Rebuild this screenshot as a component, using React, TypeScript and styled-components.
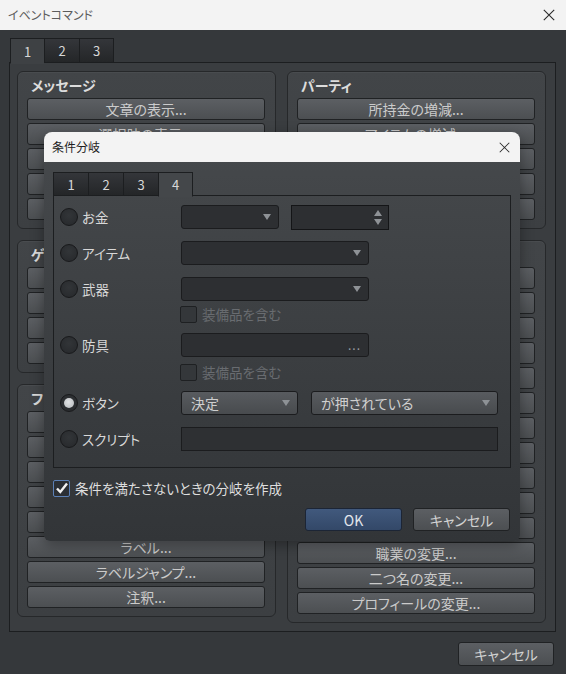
import React from "react";
import styled, { createGlobalStyle, css } from "styled-components";

const GlobalStyle = createGlobalStyle`
  html, body { margin: 0; padding: 0; background: #35383b; }
  body {
    font-family: "Noto Sans CJK JP", "Noto Sans", "Liberation Sans", sans-serif;
    font-feature-settings: "palt";
  }
  * { box-sizing: border-box; }
`;

const Window = styled.div`
  position: relative;
  width: 566px;
  height: 674px;
  display: flex;
  flex-direction: column;
  background: #35383b;
  overflow: hidden;
`;

const TitleBar = styled.div<{ $h: number; $padR: number }>`
  flex: none;
  height: ${(p) => p.$h}px;
  background: #f3f3f3;
  display: flex;
  align-items: center;
  justify-content: space-between;
  padding: 0 ${(p) => p.$padR}px 0 8px;
`;

const TitleText = styled.span<{ $color: string }>`
  font-size: 12px;
  color: ${(p) => p.$color};
  line-height: 1;
`;

const CloseBtn = styled.span`
  display: flex;
  align-items: center;
  justify-content: center;
`;

const Body = styled.div`
  flex: 1;
  display: flex;
  flex-direction: column;
  padding: 8px 10px 0 9px;
`;

const TabStrip = styled.div<{ $indent: number }>`
  display: flex;
  padding-left: ${(p) => p.$indent}px;
  position: relative;
  z-index: 1;
`;

const Tab = styled.div<{ $active?: boolean; $w: number; $h: number; $activeBg: string }>`
  width: ${(p) => p.$w}px;
  height: ${(p) => p.$h}px;
  border: 1px solid #1c1e20;
  border-right: none;
  &:last-child { border-right: 1px solid #1c1e20; }
  display: flex;
  align-items: center;
  justify-content: center;
  font-size: 13px;
  color: #d8d8d8;
  background: linear-gradient(#34363a, #242628);
  ${(p) =>
    p.$active &&
    css`
      background: ${p.$activeBg};
      border-bottom-color: transparent;
      height: ${p.$h + 1}px;
      margin-bottom: -1px;
      & + div { border-left: 1px solid #1c1e20; }
    `}
`;

const TabPanel = styled.div`
  height: 570px;
  margin-top: -1px;
  border: 1px solid #1c1e20;
  background: #3a3d40;
  display: grid;
  grid-template-columns: 259px 259px;
  column-gap: 11px;
  align-items: start;
  padding: 8px 9px 0 7px;
`;

const Column = styled.div`
  display: flex;
  flex-direction: column;
  gap: 11px;
`;

const Group = styled.div`
  border: 1px solid #26282a;
  border-radius: 6px;
  background: linear-gradient(#424548, #3c3f42);
  padding: 0 10px 8px 9px;
  box-shadow: inset 0 1px 0 rgba(255, 255, 255, 0.04);
`;

const GroupTitle = styled.div`
  height: 26px;
  line-height: 26px;
  padding-left: 4px;
  font-size: 14px;
  font-weight: 700;
  color: #dcdcdc;
  white-space: nowrap;
  overflow: hidden;
`;

const ButtonList = styled.div`
  display: flex;
  flex-direction: column;
  gap: 3px;
`;

const CmdButton = styled.div`
  height: 22px;
  border: 1px solid #202224;
  border-radius: 3px;
  background: linear-gradient(#5c5f63, #4c4f52);
  color: #cbcbcb;
  font-size: 14px;
  line-height: 20px;
  text-align: center;
  white-space: nowrap;
  overflow: hidden;
`;

const Footer = styled.div`
  display: flex;
  justify-content: flex-end;
  padding: 10px 2px 0 0;
`;

const PushButton = styled.div<{ $primary?: boolean; $w: number; $h: number }>`
  width: ${(p) => p.$w}px;
  height: ${(p) => p.$h}px;
  border: 1px solid ${(p) => (p.$primary ? "#1c2535" : "#202224")};
  border-radius: 3px;
  background: ${(p) =>
    p.$primary ? "linear-gradient(#41597d, #334868)" : "linear-gradient(#5c5f63, #4c4f52)"};
  color: ${(p) => (p.$primary ? "#e2e6ec" : "#d2d2d2")};
  font-size: 14px;
  display: flex;
  align-items: center;
  justify-content: center;
`;

/* ---------- dialog ---------- */

const Dialog = styled.div`
  position: absolute;
  left: 44px;
  top: 132px;
  width: 476px;
  height: 409px;
  border-radius: 8px 8px 6px 6px;
  overflow: hidden;
  display: flex;
  flex-direction: column;
  background: linear-gradient(#46494c, #323538);
  box-shadow: 0 4px 14px rgba(0, 0, 0, 0.35);
`;

const DialogContent = styled.div`
  display: flex;
  flex-direction: column;
  padding: 10px 9px 0 9px;
`;

const DTabPanel = styled.div`
  height: 273px;
  margin-top: -1px;
  border: 1px solid #1c1e20;
  padding: 9px 0 0 6px;
  display: flex;
  flex-direction: column;
`;

const Row = styled.div<{ $gap: number; $h?: number }>`
  display: flex;
  align-items: center;
  height: ${(p) => p.$h ?? 24}px;
  margin-top: ${(p) => p.$gap}px;
`;

const LabelCell = styled.div<{ $w: number }>`
  width: ${(p) => p.$w}px;
  flex: none;
  display: flex;
  align-items: center;
  gap: 4px;
`;

const Radio = styled.span<{ $checked?: boolean }>`
  width: 18px;
  height: 18px;
  border-radius: 50%;
  border: 1px solid #18191b;
  background: radial-gradient(circle at 50% 40%, #323538, #26282b);
  display: flex;
  align-items: center;
  justify-content: center;
  &::after {
    content: "";
    display: ${(p) => (p.$checked ? "block" : "none")};
    width: 10px;
    height: 10px;
    border-radius: 50%;
    background: radial-gradient(circle at 45% 40%, #e0e2e4, #b4b7ba);
  }
`;

const RadioLabel = styled.span`
  font-size: 13.5px;
  color: #d8d8d8;
  white-space: nowrap;
`;

const Select = styled.div<{ $w: number; $filled?: boolean; $offset?: number }>`
  width: ${(p) => p.$w}px;
  height: 24px;
  margin-left: ${(p) => p.$offset ?? 0}px;
  border: 1px solid #1b1c1e;
  border-radius: 3px;
  background: ${(p) => (p.$filled ? "linear-gradient(#585b5f, #484b4e)" : "#2d2f32")};
  display: flex;
  align-items: center;
  justify-content: space-between;
  padding: 0 7px 0 9px;
  font-size: 14px;
  color: #cfcfcf;
  white-space: nowrap;
`;

const Arrow = styled.span<{ $up?: boolean }>`
  width: 0;
  height: 0;
  border-left: 4px solid transparent;
  border-right: 4px solid transparent;
  ${(p) =>
    p.$up
      ? css`border-bottom: 6px solid #8e9296;`
      : css`border-top: 6px solid #8e9296;`}
`;

const SpinBox = styled.div`
  width: 98px;
  height: 25px;
  margin-left: 12px;
  border: 1px solid #141517;
  background: #2d2f32;
  display: flex;
  justify-content: flex-end;
  align-items: center;
  padding-right: 6px;
`;

const SpinArrows = styled.div`
  display: flex;
  flex-direction: column;
  gap: 3px;
`;

const Ellipsis = styled.span`
  font-size: 12px;
  letter-spacing: 1px;
  color: #9a9ea2;
  line-height: 1;
`;

const TextField = styled.div<{ $w: number }>`
  width: ${(p) => p.$w}px;
  height: 24px;
  border: 1px solid #1b1c1e;
  background: #2e3033;
`;

const CheckBox = styled.span<{ $checked?: boolean }>`
  width: 17px;
  height: 17px;
  flex: none;
  border-radius: 2px;
  border: 1px solid ${(p) => (p.$checked ? "#5b80b6" : "#1e2022")};
  background: ${(p) => (p.$checked ? "#2b2f34" : "#34373a")};
  display: flex;
  align-items: center;
  justify-content: center;
`;

const CheckLabel = styled.span<{ $disabled?: boolean }>`
  font-size: 13.5px;
  color: ${(p) => (p.$disabled ? "#696c70" : "#dedede")};
  white-space: nowrap;
`;

const CheckRow = styled.div<{ $gap: number; $indent: number }>`
  display: flex;
  align-items: center;
  gap: 5px;
  height: 18px;
  margin-top: ${(p) => p.$gap}px;
  padding-left: ${(p) => p.$indent}px;
`;

const DialogButtons = styled.div`
  display: flex;
  justify-content: flex-end;
  gap: 11px;
  margin-top: 11px;
  padding-right: 1px;
`;

const CloseIcon = ({ size }: { size: number }) => (
  <svg width={size} height={size} viewBox="0 0 12 12">
    <path d="M0.8 0.8L11.2 11.2M11.2 0.8L0.8 11.2" stroke="#2a2a2a" strokeWidth="1.1" fill="none" />
  </svg>
);

const CheckMark = () => (
  <svg width="14" height="14" viewBox="0 0 14 14">
    <path d="M2 7.5L5.3 11L12 2.5" stroke="#f2f2f2" strokeWidth="2.4" fill="none" strokeLinejoin="miter" />
  </svg>
);

const leftGroups = [
  {
    title: "メッセージ",
    items: ["文章の表示...", "選択肢の表示...", "数値入力の処理...", "アイテム選択の処理...", "文章のスクロール表示..."],
  },
  { title: "ゲーム進行", items: ["スイッチの操作...", "変数の操作...", "セルフスイッチの操作...", "タイマーの操作..."] },
  {
    title: "フロー制御",
    items: ["条件分岐...", "ループ", "ループの中断", "イベント処理の中断", "コモンイベント...", "ラベル...", "ラベルジャンプ...", "注釈..."],
  },
];

const rightGroups = [
  { title: "パーティ", items: ["所持金の増減...", "アイテムの増減...", "武器の増減...", "防具の増減...", "メンバーの入れ替え..."] },
  {
    title: "アクター",
    items: [
      "HPの増減...",
      "MPの増減...",
      "TPの増減...",
      "ステートの変更...",
      "全回復...",
      "経験値の増減...",
      "レベルの増減...",
      "能力値の増減...",
      "スキルの増減...",
      "装備の変更...",
      "名前の変更...",
      "職業の変更...",
      "二つ名の変更...",
      "プロフィールの変更...",
    ],
  },
];

type G = { title: string; items: string[] };

const GroupBox = ({ g }: { g: G }) => (
  <Group>
    <GroupTitle>{g.title}</GroupTitle>
    <ButtonList>
      {g.items.map((t) => (
        <CmdButton key={t}>{t}</CmdButton>
      ))}
    </ButtonList>
  </Group>
);

const LABEL_W = 121;

export default function App() {
  return (
    <>
      <GlobalStyle />
      <Window>
        <TitleBar $h={30} $padR={11}>
          <TitleText $color="#5c5c5c">イベントコマンド</TitleText>
          <CloseBtn>
            <CloseIcon size={12} />
          </CloseBtn>
        </TitleBar>
        <Body>
          <TabStrip $indent={1}>
            <Tab $active $w={34} $h={25} $activeBg="#3e4144">1</Tab>
            <Tab $w={35} $h={25} $activeBg="#3e4144">2</Tab>
            <Tab $w={35} $h={25} $activeBg="#3e4144">3</Tab>
          </TabStrip>
          <TabPanel>
            <Column>
              {leftGroups.map((g) => (
                <GroupBox key={g.title} g={g} />
              ))}
            </Column>
            <Column>
              {rightGroups.map((g) => (
                <GroupBox key={g.title} g={g} />
              ))}
            </Column>
          </TabPanel>
          <Footer>
            <PushButton $w={96} $h={24}>キャンセル</PushButton>
          </Footer>
        </Body>

        <Dialog>
          <TitleBar $h={30} $padR={10}>
            <TitleText $color="#1e1e1e">条件分岐</TitleText>
            <CloseBtn>
              <CloseIcon size={11} />
            </CloseBtn>
          </TitleBar>
          <DialogContent>
            <TabStrip $indent={0}>
              <Tab $w={35} $h={24} $activeBg="#44474a">1</Tab>
              <Tab $w={35} $h={24} $activeBg="#44474a">2</Tab>
              <Tab $w={35} $h={24} $activeBg="#44474a">3</Tab>
              <Tab $active $w={35} $h={24} $activeBg="#44474a">4</Tab>
            </TabStrip>
            <DTabPanel>
              <Row $gap={0}>
                <LabelCell $w={LABEL_W}>
                  <Radio />
                  <RadioLabel>お金</RadioLabel>
                </LabelCell>
                <Select $w={98}>
                  <span />
                  <Arrow />
                </Select>
                <SpinBox>
                  <SpinArrows>
                    <Arrow $up />
                    <Arrow />
                  </SpinArrows>
                </SpinBox>
              </Row>
              <Row $gap={12}>
                <LabelCell $w={LABEL_W}>
                  <Radio />
                  <RadioLabel>アイテム</RadioLabel>
                </LabelCell>
                <Select $w={188}>
                  <span />
                  <Arrow />
                </Select>
              </Row>
              <Row $gap={12}>
                <LabelCell $w={LABEL_W}>
                  <Radio />
                  <RadioLabel>武器</RadioLabel>
                </LabelCell>
                <Select $w={188}>
                  <span />
                  <Arrow />
                </Select>
              </Row>
              <CheckRow $gap={4} $indent={LABEL_W - 1}>
                <CheckBox />
                <CheckLabel $disabled>装備品を含む</CheckLabel>
              </CheckRow>
              <Row $gap={10}>
                <LabelCell $w={LABEL_W}>
                  <Radio />
                  <RadioLabel>防具</RadioLabel>
                </LabelCell>
                <Select $w={188}>
                  <span />
                  <Ellipsis>...</Ellipsis>
                </Select>
              </Row>
              <CheckRow $gap={6} $indent={LABEL_W - 1}>
                <CheckBox />
                <CheckLabel $disabled>装備品を含む</CheckLabel>
              </CheckRow>
              <Row $gap={10}>
                <LabelCell $w={LABEL_W}>
                  <Radio $checked />
                  <RadioLabel>ボタン</RadioLabel>
                </LabelCell>
                <Select $w={117} $filled>
                  <span>決定</span>
                  <Arrow />
                </Select>
                <Select $w={187} $filled $offset={13}>
                  <span>が押されている</span>
                  <Arrow />
                </Select>
              </Row>
              <Row $gap={12}>
                <LabelCell $w={LABEL_W}>
                  <Radio />
                  <RadioLabel>スクリプト</RadioLabel>
                </LabelCell>
                <TextField $w={317} />
              </Row>
            </DTabPanel>
            <CheckRow $gap={11} $indent={0}>
              <CheckBox $checked>
                <CheckMark />
              </CheckBox>
              <CheckLabel>条件を満たさないときの分岐を作成</CheckLabel>
            </CheckRow>
            <DialogButtons>
              <PushButton $primary $w={97} $h={23}>
                OK
              </PushButton>
              <PushButton $w={97} $h={23}>
                キャンセル
              </PushButton>
            </DialogButtons>
          </DialogContent>
        </Dialog>
      </Window>
    </>
  );
}
